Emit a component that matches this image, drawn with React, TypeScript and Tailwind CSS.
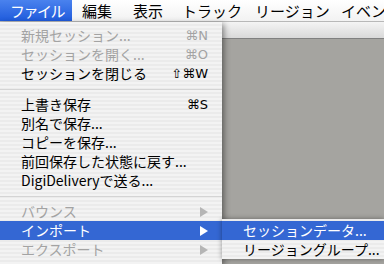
import React from 'react'

const jp = { fontFamily: '"Noto Sans CJK JP", "DejaVu Sans", sans-serif' }

type Item =
  | { kind: 'sep' }
  | { kind: 'item'; label: string; key?: string; disabled?: boolean; sub?: boolean; active?: boolean }

const items: Item[] = [
  { kind: 'item', label: '新規セッション...', key: '⌘N', disabled: true },
  { kind: 'item', label: 'セッションを開く...', key: '⌘O', disabled: true },
  { kind: 'item', label: 'セッションを閉じる', key: '⇧⌘W' },
  { kind: 'sep' },
  { kind: 'item', label: '上書き保存', key: '⌘S' },
  { kind: 'item', label: '別名で保存...' },
  { kind: 'item', label: 'コピーを保存...' },
  { kind: 'item', label: '前回保存した状態に戻す...' },
  { kind: 'item', label: 'DigiDeliveryで送る...' },
  { kind: 'sep' },
  { kind: 'item', label: 'バウンス', sub: true, disabled: true },
  { kind: 'item', label: 'インポート', sub: true, active: true },
  { kind: 'item', label: 'エクスポート', sub: true, disabled: true }
]

const titles = [
  { label: 'ファイル', w: 'w-[72px] tracking-[-1.5px]', active: true },
  { label: '編集', w: 'w-[51px]' },
  { label: '表示', w: 'w-[49px]' },
  { label: 'トラック', w: 'w-[73px]' },
  { label: 'リージョン', w: 'w-[86px]' },
  { label: 'イベント', w: 'w-[60px]' }
]

const stripes =
  'bg-[repeating-linear-gradient(0deg,#f3f3f3_0px,#f3f3f3_2px,#ebebeb_2px,#ebebeb_4px)]'

const Arrow = ({ color }: { color: string }) => (
  <svg width="8" height="10" viewBox="0 0 8 10">
    <path d="M0 0 L8 5 L0 10 Z" fill={color} />
  </svg>
)

export default function App() {
  return (
    <div className="relative w-[384px] h-[264px] overflow-hidden bg-[#a5a4a0]" style={jp}>
      <div className="flex h-[22px] bg-[linear-gradient(#ffffff,#f2f2f2)] border-b border-[#b8b8b8] text-[15px] leading-[22px] text-black">
        {titles.map((t) => (
          <div
            key={t.label}
            className={`${t.w} shrink-0 whitespace-nowrap ${
              t.active
                ? 'pl-[10px] text-white bg-[linear-gradient(#4a82ee,#1f5bdc)]'
                : 'pl-[10px]'
            }`}
          >
            {t.label}
          </div>
        ))}
      </div>

      <div className="flex h-[242px]">
        <div
          className={`w-[222px] shrink-0 pt-[4px] ${stripes} shadow-[2px_2px_6px_rgba(0,0,0,0.45)] z-10 text-[14px]`}
        >
          {items.map((it, i) =>
            it.kind === 'sep' ? (
              <div key={i} className="h-[12px] flex items-center">
                <div className="w-full h-px bg-[#d4d4d4]" />
              </div>
            ) : (
              <div
                key={i}
                className={`h-[19px] flex items-center pl-[21px] pr-[14px] ${
                  it.active ? 'bg-[#3467d3] text-white' : it.disabled ? 'text-[#a3a3a3]' : 'text-black'
                }`}
              >
                <span className="flex-1 whitespace-nowrap">{it.label}</span>
                {it.key && (
                  <span className="text-[13px]" style={{ fontFamily: '"DejaVu Sans", sans-serif' }}>
                    {it.key}
                  </span>
                )}
                {it.sub && (
                  <Arrow color={it.active ? '#ffffff' : it.disabled ? '#b5b5b5' : '#333333'} />
                )}
              </div>
            )
          )}
        </div>

        <div className="flex-1 flex flex-col">
          <div className="h-[17px] bg-[linear-gradient(#f4f4f4,#d9d9d9)] border-b border-[#808080]" />
          <div className="flex-1 bg-[#a5a4a0]" />
        </div>
      </div>

      <div
        className={`absolute left-[222px] top-[219px] w-[162px] pt-[2px] ${stripes} shadow-[0_0_5px_rgba(0,0,0,0.4)] z-20 text-[14px]`}
      >
        <div className="h-[19px] flex items-center pl-[21px] bg-[#3467d3] text-white whitespace-nowrap">
          セッションデータ...
        </div>
        <div className="h-[19px] flex items-center pl-[21px] text-black whitespace-nowrap">
          リージョングループ...
        </div>
      </div>
    </div>
  )
}
